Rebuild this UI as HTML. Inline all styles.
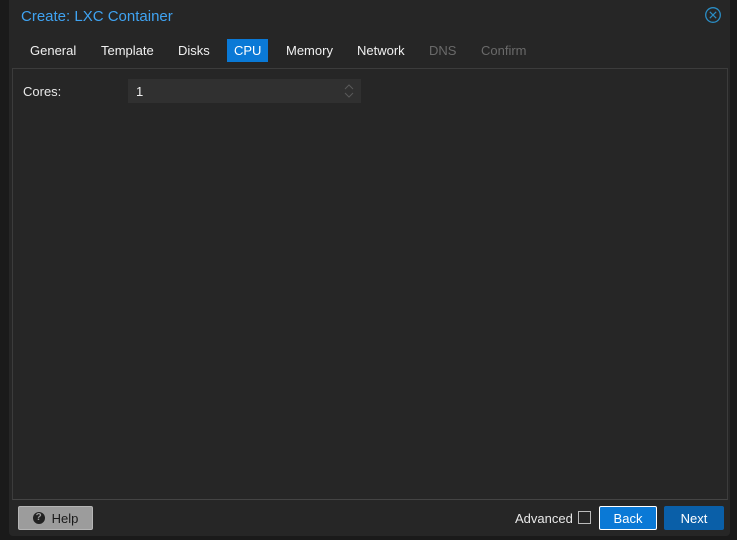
<!DOCTYPE html>
<html><head><style>
body{margin:0;width:737px;height:540px;background:#1a1a1a;font-family:"Liberation Sans",sans-serif;font-size:13px;position:relative;overflow:hidden}
.win{position:absolute;left:9px;top:0;width:721px;height:536px;background:#262626;border-radius:0 0 4px 4px}
.title{position:absolute;left:21px;top:8px;color:#3fa3f2;font-size:15px}
.tab{position:absolute;top:39px;height:23px;line-height:23px;color:#f0f0f0;font-size:13px;padding:0 7px}
.panel{position:absolute;left:12px;top:68px;width:714px;height:430px;border:1px solid #3c3c3c;border-bottom:1px solid #444}
.btn{position:absolute;top:506px;height:24px;display:flex;align-items:center;justify-content:center;color:#fff;border-radius:2px;box-sizing:border-box}
</style></head><body>
<div class="win"></div>
<div class="title">Create: LXC Container</div>
<svg style="position:absolute;left:704px;top:6px" width="18" height="18"><circle cx="9" cy="9" r="7.3" fill="none" stroke="#2a8dc5" stroke-width="1.3"/><path d="M5.8 5.8L12.2 12.2M12.2 5.8L5.8 12.2" stroke="#2a8dc5" stroke-width="1.2"/></svg>
<div class="tab" style="left:23px">General</div>
<div class="tab" style="left:94px">Template</div>
<div class="tab" style="left:171px">Disks</div>
<div class="tab" style="left:227px;width:27px;background:#0a79d6;color:#fff">CPU</div>
<div class="tab" style="left:279px">Memory</div>
<div class="tab" style="left:350px">Network</div>
<div class="tab" style="left:422px;color:#6a6a6a">DNS</div>
<div class="tab" style="left:474px;color:#6a6a6a">Confirm</div>
<div class="panel"></div>
<div style="position:absolute;left:23px;top:84px;color:#e8e8e8">Cores:</div>
<div style="position:absolute;left:128px;top:79px;width:233px;height:24px;background:#303030"></div>
<div style="position:absolute;left:136px;top:84px;color:#f0f0f0">1</div>
<svg style="position:absolute;left:343px;top:83px" width="12" height="16"><path d="M2 6L6 2L10 6M2 10L6 14L10 10" fill="none" stroke="#5a5a5a" stroke-width="1"/></svg>
<div class="btn" style="left:18px;width:75px;background:#9c9c9c;border:1px solid #b5b5b5;color:#1a1a1a"><span style="display:inline-block;width:12px;height:12px;border-radius:50%;background:#222;color:#9c9c9c;font-size:10px;line-height:12px;text-align:center;font-weight:bold;margin-right:7px">?</span>Help</div>
<div style="position:absolute;left:515px;top:511px;color:#e8e8e8">Advanced</div>
<div style="position:absolute;left:578px;top:511px;width:13px;height:13px;border:1px solid #bbb;box-sizing:border-box"></div>
<div class="btn" style="left:599px;width:58px;background:#0a79d6;border:1px solid #fff">Back</div>
<div class="btn" style="left:664px;width:60px;background:#0a5fa8">Next</div>
</body></html>
